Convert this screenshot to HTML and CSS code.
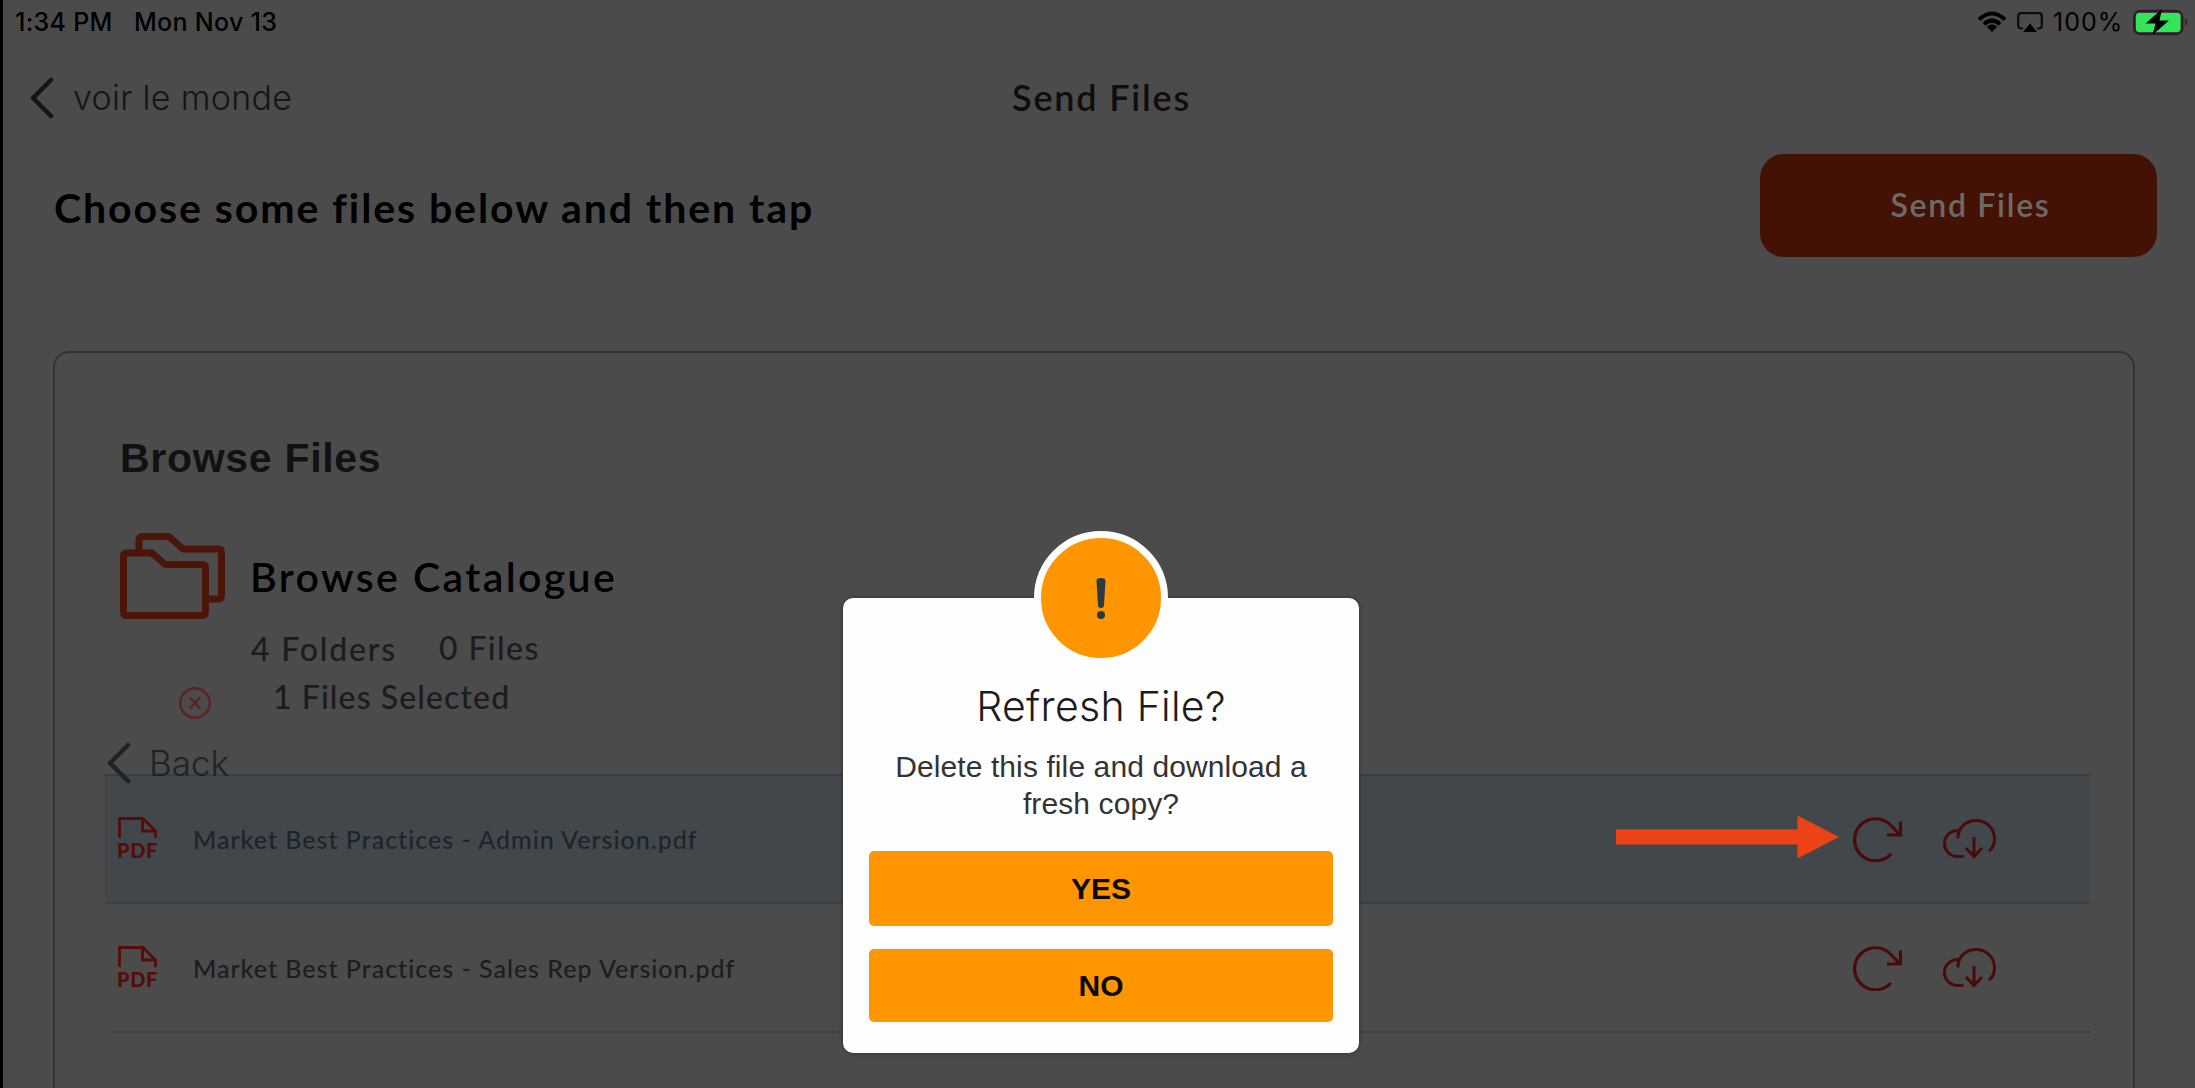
FILE: index.html
```html
<!DOCTYPE html>
<html>
<head lang="en">
    <meta charset="UTF-8">
    <title>Send Files</title>
    <link rel="stylesheet" href="styles.css">
</head>
<body>
<svg class="defs">
    <symbol id="chevron" viewBox="0 0 24 42">
        <path d="M21 3L3 21L21 39" fill="none" stroke="currentColor" stroke-width="4.500" stroke-linecap="round" stroke-linejoin="round"/>
    </symbol>
    <symbol id="page" viewBox="0 0 44 24">
        <path d="M2.500 22V2.500H26L38.500 15V22M25.500 2.500V15H38" fill="none" stroke="currentColor" stroke-width="2.800"/>
    </symbol>
    <symbol id="refresh" viewBox="0 0 52 46">
        <path d="M40 38A21 21 0 1 1 40 9.500L48.500 18.500M49.500 5.500V19H36" fill="none" stroke="currentColor" stroke-width="3.200"/>
    </symbol>
    <symbol id="cloud" viewBox="0 0 56 42">
        <path d="M22.500 38.500H16A13 13 0 1 1 17 12.500M17 20.500C16.500 10 25 2.500 35 2.500C46 2.500 53.500 11 53.500 21C53.500 26 51.500 30.500 48 33M33 19V38M25 30L33 38.500L41 30" fill="none" stroke="currentColor" stroke-width="3"/>
    </symbol>
</svg>

<div class="page">
    <div class="status">
        <span class="time">1:34 PM</span>
        <span>Mon Nov 13</span>
        <div class="status-right">
            <svg width="30" height="22" viewBox="0 0 30 22">
                <path d="M2 8.500Q15-3.500 28 8.500M7 13.200Q15 6.200 23 13.200" fill="none" stroke="#000" stroke-width="4"/>
                <path d="M15 13.500C17 13.500 19 14.500 20 16L15 21L10 16C11 14.500 13 13.500 15 13.500Z"/>
            </svg>
            <svg class="airplay" width="26" height="21" viewBox="0 0 26 21">
                <path d="M6 16.500H4Q1.200 16.500 1.200 13.500V4.200Q1.200 1.200 4.200 1.200H21.800Q24.800 1.200 24.800 4.200V13.500Q24.800 16.500 22 16.500H20" fill="none" stroke="#0c0c0c" stroke-width="2.200"/>
                <path d="M13 11.500L20 20H6Z"/>
            </svg>
            <span class="percent">100%</span>
            <svg width="56" height="28" viewBox="0 0 56 28">
                <rect x="1.200" y="3" width="48" height="23" rx="6" fill="none" stroke="#2c1f2a" stroke-width="2.400"/>
                <rect x="3" y="5" width="44.500" height="19" rx="3" fill="#32e65a"/>
                <path d="M52 10Q54.500 11 54.500 14T52 18Z" fill="#2c2c2c"/>
                <path d="M29 1L12.500 15.500H22.500L19.500 27L36 12.500H26.500Z"/>
            </svg>
        </div>
    </div>

    <div class="nav">
        <div class="nav-back">
            <svg width="24" height="42"><use href="#chevron"/></svg>
            <span>voir le monde</span>
        </div>
        <div class="nav-title">Send Files</div>
    </div>

    <div class="toolbar">
        <h1>Choose some files below and then tap</h1>
        <div class="send">Send Files</div>
    </div>

    <div class="panel">
        <h2>Browse Files</h2>
        <div class="catalogue">
            <svg width="106" height="86" viewBox="0 0 106 86" fill="none" stroke="#4b150a" stroke-width="7" stroke-linejoin="round">
                <path d="M19 18V7Q19 3.500 23 3.500H49L63 16H98Q101.500 16 101.500 19.500V62Q101.500 66 98 66H88"/>
                <path d="M3.500 23Q3.500 20 7 20H32L45 31.500H82Q85.500 31.500 85.500 35V79Q85.500 82.500 82 82.500H7Q3.500 82.500 3.500 79Z"/>
            </svg>
            <h3>Browse Catalogue</h3>
        </div>
        <div class="counts">
            <span class="folders">4 Folders</span>
            <span class="files">0 Files</span>
        </div>
        <div class="selected">
            <svg width="34" height="34" viewBox="0 0 34 34" fill="none" stroke="#5c2320" stroke-width="2.400">
                <circle cx="17" cy="17" r="14.800"/>
                <path d="M12 11.500L22 22.500M22 11.500L12 22.500"/>
            </svg>
            <span>1 Files Selected</span>
        </div>
        <div class="back">
            <svg width="24" height="42"><use href="#chevron"/></svg>
            <span>Back</span>
        </div>
        <div class="list">
            <div class="row active">
                <div class="pdf">
                    <svg width="44" height="24"><use href="#page"/></svg>
                    <span>PDF</span>
                </div>
                <span class="name">Market Best Practices - Admin Version.pdf</span>
                <svg class="refresh" width="52" height="46"><use href="#refresh"/></svg>
                <svg class="cloud" width="56" height="42"><use href="#cloud"/></svg>
            </div>
            <div class="row">
                <div class="pdf">
                    <svg width="44" height="24"><use href="#page"/></svg>
                    <span>PDF</span>
                </div>
                <span class="name">Market Best Practices - Sales Rep Version.pdf</span>
                <svg class="refresh" width="52" height="46"><use href="#refresh"/></svg>
                <svg class="cloud" width="56" height="42"><use href="#cloud"/></svg>
            </div>
        </div>
    </div>
</div>

<svg class="arrow" width="224" height="46" viewBox="0 0 224 46">
    <path d="M0 15.500H181.500V1.500L223 23L181.500 44.500V30.500H0Z" fill="#eb4316"/>
</svg>

<div class="modal">
    <div class="badge">
        <svg width="10" height="42" viewBox="0 0 10 42" fill="#2b3a3c">
            <path d="M.5 4Q.5 1 5 1T9.500 4L8 28Q8 31 5 31T2 28Z"/>
            <circle cx="5" cy="38" r="4"/>
        </svg>
    </div>
    <div class="modal-title">Refresh File?</div>
    <p>Delete this file and download a<br>fresh copy?</p>
    <div class="btn yes">YES</div>
    <div class="btn no">NO</div>
</div>
</body>
</html>
```
FILE: styles.css
```css
*{
    margin: 0;
    padding: 0;
    box-sizing: border-box;
}
body{
    width: 2195px;
    height: 1088px;
    overflow: hidden;
    position: relative;
    background: #4b4b4b;
    font-family: Lato, sans-serif;
    color: #000;
}
svg{
    display: block;
    flex: none;
}
.defs{
    width: 0;
    height: 0;
    position: absolute;
}
.page{
    height: 1088px;
    overflow: hidden;
    border-left: 3px solid #000;
}

/* status bar */
.status{
    display: flex;
    align-items: center;
    height: 44px;
    padding: 0 6px 0 12px;
    font: 500 25px/44px Inter, sans-serif;
    letter-spacing: .3px;
}
.time{
    width: 119px;
}
.status-right{
    display: flex;
    align-items: center;
    margin-left: auto;
}
.airplay{
    margin-left: 10px;
}
.percent{
    margin: 0 8px 0 10px;
    width: 72px;
    font-weight: 400;
    letter-spacing: 1px;
}

/* navigation */
.nav{
    display: grid;
    grid-template-columns: 1fr auto 1fr;
    align-items: center;
    height: 108px;
    padding-left: 27px;
    padding-right: 22px;
}
.nav-back{
    display: flex;
    align-items: center;
    gap: 19px;
    font: 300 34px/40px Inter, sans-serif;
    letter-spacing: .3px;
    color: #151515;
}
.nav-title{
    padding-bottom: 3px;
    font-size: 36px;
    font-weight: 600;
    letter-spacing: 1.8px;
    color: #0e0e0e;
}
.toolbar{
    display: flex;
    align-items: center;
    justify-content: space-between;
    height: 104px;
    margin-top: 1px;
    padding: 0 38px 0 51px;
}
h1{
    padding-top: 4px;
    font-size: 41px;
    font-weight: 700;
    letter-spacing: 1.93px;
}
.send{
    width: 397px;
    height: 103px;
    padding-left: 24px;
    border-radius: 24px;
    background: #441205;
    color: #6d6a67;
    font-size: 32px;
    font-weight: 600;
    line-height: 102px;
    letter-spacing: 1.7px;
    text-align: center;
}

/* file browser */
.panel{
    width: 2082px;
    height: 800px;
    margin: 94px 0 0 50px;
    padding: 80px 43px 0 50px;
    border: 2px solid #333;
    border-radius: 16px;
}
h2{
    padding-left: 15px;
    font: bold 41px/50px "Liberation Sans", sans-serif;
    letter-spacing: .7px;
    color: #111;
}
.catalogue{
    display: flex;
    align-items: center;
    gap: 24px;
    margin: 50px 0 0 15px;
    height: 86px;
}
h3{
    font-size: 41px;
    font-weight: 600;
    letter-spacing: 2.4px;
}
.counts{
    display: flex;
    align-items: flex-start;
    height: 36px;
    margin: 12px 0 0 146px;
    font-size: 32px;
    font-weight: 500;
    line-height: 36px;
    color: #1c1c1c;
}
.folders{
    width: 188px;
    letter-spacing: 1.8px;
}
.files{
    line-height: 34px;
    letter-spacing: 1.4px;
}
.selected{
    display: flex;
    align-items: center;
    gap: 61px;
    height: 56px;
    margin: 8px 0 0 73px;
    font-size: 32px;
    font-weight: 500;
    letter-spacing: 1.1px;
    color: #1c1c1c;
}
.selected span{
    padding-bottom: 13px;
}
.back{
    display: flex;
    align-items: center;
    gap: 18px;
    position: relative;
    z-index: 1;
    height: 42px;
    margin: 11px 0 -10px 2px;
    font: 300 35px/42px Inter, sans-serif;
    color: #202325;
}
.row{
    display: flex;
    align-items: center;
    height: 129px;
    margin-left: 6px;
    padding: 0 93px 0 6px;
    border-bottom: 2px solid #404040;
    color: #1d1d1d;
}
.row.active{
    height: 130px;
    margin-left: 0;
    padding-left: 12px;
    border-top: 2px solid #383f46;
    border-bottom-color: #3a4147;
    background: #42474b;
    color: #1e242c;
}
.pdf{
    width: 44px;
    height: 46px;
    color: #560d08;
    font-size: 20px;
    font-weight: 900;
    line-height: 20px;
    letter-spacing: .6px;
}
.name{
    flex: 1;
    padding-left: 32px;
    font-size: 25px;
    font-weight: 500;
    letter-spacing: 1px;
}
.refresh, .cloud{
    color: #4a0a09;
}
.cloud{
    margin-left: 38px;
}

/* pointer to the refresh button */
.arrow{
    position: absolute;
    left: 1616px;
    top: 814px;
}

/* dialog */
.modal{
    position: absolute;
    left: 843px;
    top: 598px;
    width: 516px;
    height: 455px;
    padding: 83px 26px 0;
    border-radius: 10px;
    background: #fefefe;
    box-shadow: 0 0 4px rgba(0, 0, 0, .4);
    text-align: center;
}
.badge{
    display: flex;
    align-items: center;
    justify-content: center;
    position: absolute;
    left: 191px;
    top: -67px;
    width: 134px;
    height: 134px;
    border: 7px solid #fefefe;
    border-radius: 50%;
    background: #ff9500;
}
.modal-title{
    font: 300 41px/50px Inter, sans-serif;
    letter-spacing: .3px;
    color: #1c1c1c;
}
.modal p{
    margin: 17px -10px 29px;
    font: 30px/37px "Liberation Sans", sans-serif;
    letter-spacing: .1px;
    color: #333;
}
.btn{
    height: 75px;
    border-radius: 5px;
    background: #ff9500;
    font: bold 30px/75px "Liberation Sans", sans-serif;
    color: #0a0a0a;
}
.no{
    height: 73px;
    margin-top: 23px;
    line-height: 73px;
}
```
